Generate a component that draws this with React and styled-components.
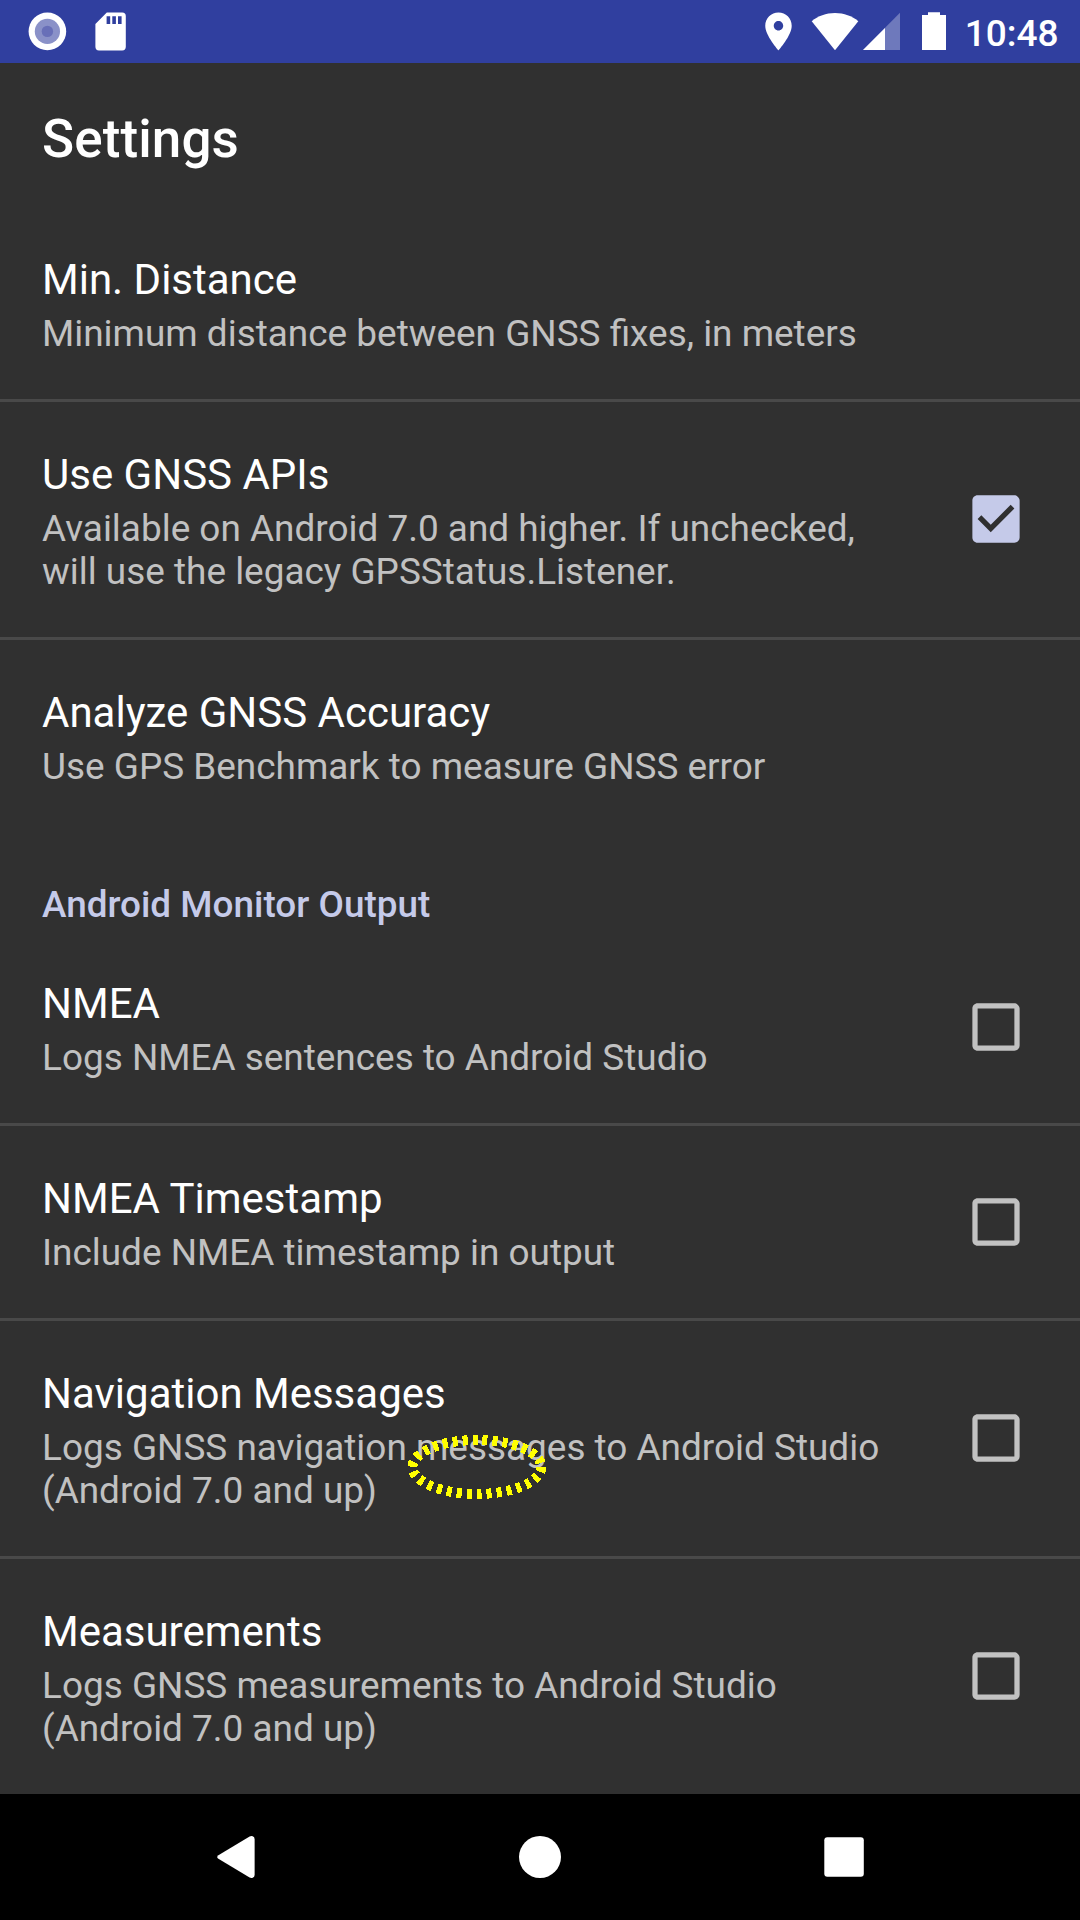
import React from "react";
import styled, { createGlobalStyle } from "styled-components";

const GlobalStyle = createGlobalStyle`
  * { box-sizing: border-box; }
  html, body { margin: 0; padding: 0; background: #303030; }
  body { font-family: Roboto, "Noto Sans", sans-serif; }
`;

const Screen = styled.div`
  position: relative;
  display: flex;
  flex-direction: column;
  width: 1080px;
  height: 1920px;
  overflow: hidden;
  background: #303030;
  color: #fff;
`;

const StatusBar = styled.header`
  display: flex;
  justify-content: space-between;
  height: 63px;
  padding: 0 21.5px 0 28px;
  background: #303f9f;
`;

const StatusGroup = styled.div`
  display: flex;
  align-items: flex-start;
`;

const StatusIcon = styled.svg`
  display: block;
  flex: none;
  height: 63px;
  width: ${(p) => p.$width}px;
  margin-right: ${(p) => p.$gap || 0}px;
  fill: #fff;
`;

const Clock = styled.time`
  display: flex;
  justify-content: flex-end;
  font-size: 37px;
  font-weight: 500;
  line-height: 43px;
  padding-top: 12px;
  width: 92.5px;
  white-space: nowrap;
`;

const Toolbar = styled.div`
  flex: none;
  height: 144px;
  padding: 46px 42px 0;
`;

const ScreenTitle = styled.h1`
  margin: 0;
  font-size: 53px;
  font-weight: 500;
  line-height: 61px;
  letter-spacing: 0.1px;
`;

const List = styled.main`
  flex: 1;
  min-height: 0;
`;

const Row = styled.div`
  display: flex;
  align-items: flex-start;
  justify-content: space-between;
  box-sizing: content-box;
  height: ${(p) => (p.$lines === 2 ? 235 : 192)}px;
  border-bottom: ${(p) => (p.$divider ? "3px solid #494949" : "none")};
  padding: 0 52px 0 42px;
`;

const RowText = styled.div`
  padding-top: 48px;
`;

const RowTitle = styled.div`
  font-size: 42px;
  line-height: 49px;
  white-space: nowrap;
`;

const Summary = styled.div`
  margin-top: 8px;
  font-size: 36.93px;
  line-height: 43px;
  color: #c1c1c1;
  white-space: pre;
`;

const Category = styled.h2`
  height: 99px;
  margin: 0;
  padding: 51px 42px 0;
  font-size: 36.9px;
  font-weight: 500;
  line-height: 43px;
  color: #c5cae9;
`;

const CheckIcon = styled.svg`
  display: block;
  flex: none;
  width: 64px;
  height: 64px;
  margin-top: ${(p) => (p.$lines === 2 ? 85 : 64)}px;
  fill: ${(p) => (p.$checked ? "#c5cae9" : "#c1c1c1")};
`;

const NavBar = styled.nav`
  flex: none;
  display: flex;
  align-items: center;
  justify-content: space-between;
  height: 126px;
  padding: 0 204px;
  background: #000;
`;

const NavIcon = styled.svg`
  display: block;
  width: 64px;
  height: 64px;
  fill: #fff;
`;

const Highlight = styled.svg`
  position: absolute;
  left: 400px;
  top: 1430px;
  width: 152px;
  height: 74px;
  fill: none;
  stroke: #ff0;
  stroke-width: 10;
  stroke-dasharray: 5 5;
`;

function Checkbox({ checked, lines }) {
  return (
    <CheckIcon viewBox="-0.19 -0.19 24.38 24.38" $checked={checked} $lines={lines}>
      {checked ? (
        <path d="M19 3H5c-1.11 0-2 .9-2 2v14c0 1.1.89 2 2 2h14c1.11 0 2-.9 2-2V5c0-1.1-.89-2-2-2zm-9 14l-5-5 1.41-1.41L10 14.17l7.59-7.59L19 8l-9 9z" />
      ) : (
        <path d="M19 5v14H5V5h14m0-2H5c-1.1 0-2 .9-2 2v14c0 1.1.9 2 2 2h14c1.1 0 2-.9 2-2V5c0-1.1-.9-2-2-2z" />
      )}
    </CheckIcon>
  );
}

function Preference({ title, summary, checked, divider }) {
  const lines = summary.split("\n").length;
  return (
    <Row $lines={lines} $divider={divider}>
      <RowText>
        <RowTitle>{title}</RowTitle>
        <Summary>{summary}</Summary>
      </RowText>
      {checked !== undefined && <Checkbox checked={checked} lines={lines} />}
    </Row>
  );
}

const general = [
  { title: "Min. Distance", summary: "Minimum distance between GNSS fixes, in meters", divider: true },
  {
    title: "Use GNSS APIs",
    summary: "Available on Android 7.0 and higher. If unchecked,\nwill use the legacy GPSStatus.Listener.",
    checked: true,
    divider: true,
  },
  { title: "Analyze GNSS Accuracy", summary: "Use GPS Benchmark to measure GNSS error" },
];

const monitor = [
  { title: "NMEA", summary: "Logs NMEA sentences to Android Studio", checked: false, divider: true },
  { title: "NMEA Timestamp", summary: "Include NMEA timestamp in output", checked: false, divider: true },
  {
    title: "Navigation Messages",
    summary: "Logs GNSS navigation messages to Android Studio\n(Android 7.0 and up)",
    checked: false,
    divider: true,
  },
  {
    title: "Measurements",
    summary: "Logs GNSS measurements to Android Studio\n(Android 7.0 and up)",
    checked: false,
  },
];

export default function App() {
  return (
    <>
      <GlobalStyle />
      <Screen>
        <StatusBar>
          <StatusGroup>
            <StatusIcon $width={39} $gap={28} viewBox="28 0 39 63">
              <circle cx="47.4" cy="31.4" r="18.8" />
              <circle cx="47.4" cy="31.4" r="12.6" fill="#8a91c8" />
              <circle cx="47.4" cy="31.4" r="5.7" fill="#686fb8" />
            </StatusIcon>
            <StatusIcon $width={32} viewBox="95 0 32 63">
              <path
                fillRule="evenodd"
                d="M106.8 12.5H122.2A3.6 3.6 0 0 1 125.8 16.1V46.8A3.6 3.6 0 0 1 122.2 50.4H99A3.6 3.6 0 0 1 95.4 46.8V23.9ZM106.6 16.3V24H110.2V16.3ZM112.3 16.3V24H115.9V16.3ZM118 16.3V24H121.6V16.3Z"
              />
            </StatusIcon>
          </StatusGroup>
          <StatusGroup>
            <StatusIcon $width={28} $gap={19} viewBox="764 0 28 63">
              <g transform="translate(755.8 8.7) scale(1.89)">
                <path d="M12 2C8.13 2 5 5.13 5 9c0 5.25 7 13 7 13s7-7.75 7-13c0-3.87-3.13-7-7-7zm0 9.5c-1.38 0-2.5-1.12-2.5-2.5s1.12-2.5 2.5-2.5 2.5 1.12 2.5 2.5-1.12 2.5-2.5 2.5z" />
              </g>
            </StatusIcon>
            <StatusIcon $width={48} $gap={4} viewBox="811 0 48 63">
              <path d="M835 50.2L811.7 21.2C818 16 826 13 835 13S852 16 858.3 21.2Z" />
            </StatusIcon>
            <StatusIcon $width={37} $gap={22} viewBox="863 0 37 63">
              <path d="M863 50H900V12.7Z" fillOpacity="0.3" />
              <path d="M863 50H885V28Z" />
            </StatusIcon>
            <StatusIcon $width={24} $gap={20} viewBox="922 0 24 63">
              <path d="M928 12.2H940V15H946V50H922V15H928Z" />
            </StatusIcon>
            <Clock>10:48</Clock>
          </StatusGroup>
        </StatusBar>
        <Toolbar>
          <ScreenTitle>Settings</ScreenTitle>
        </Toolbar>
        <List>
          {general.map((item) => (
            <Preference key={item.title} {...item} />
          ))}
          <Category>Android Monitor Output</Category>
          {monitor.map((item) => (
            <Preference key={item.title} {...item} />
          ))}
        </List>
        <NavBar>
          <NavIcon viewBox="204 1825 64 64">
            <path d="M218.4 1855.2L249.6 1836.5Q251 1835.7 252.7 1836.2Q254.6 1837 254.6 1839V1875Q254.6 1877 252.7 1877.8Q251 1878.3 249.6 1877.5L218.4 1858.8Q216 1857 218.4 1855.2Z" />
          </NavIcon>
          <NavIcon viewBox="508 1825 64 64">
            <circle cx="540" cy="1857" r="21" />
          </NavIcon>
          <NavIcon viewBox="812 1825 64 64">
            <rect x="824.3" y="1837.2" width="39.5" height="39.5" rx="3" />
          </NavIcon>
        </NavBar>
        <Highlight viewBox="400 1430 152 74" shapeRendering="crispEdges">
          <ellipse cx="476.9" cy="1467" rx="64.5" ry="27" />
        </Highlight>
      </Screen>
    </>
  );
}
